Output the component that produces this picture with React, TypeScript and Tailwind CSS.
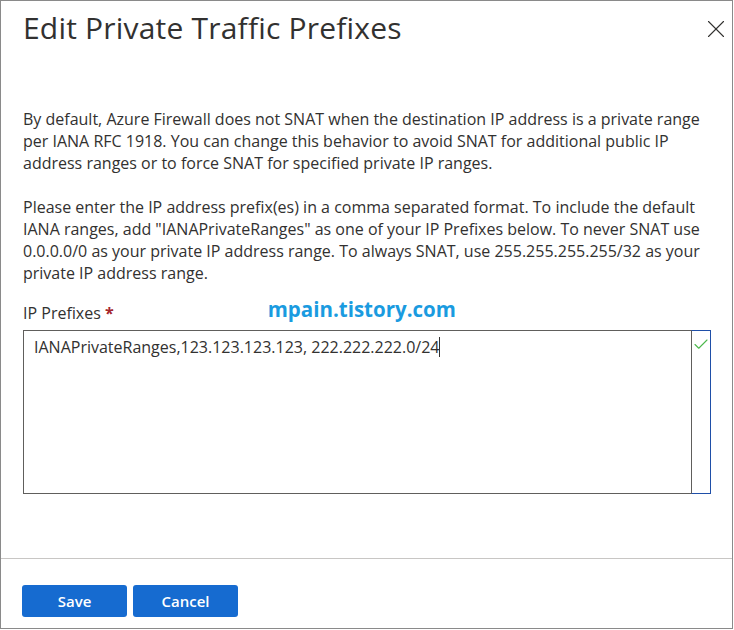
import { X, Check } from 'lucide-react'

const font = { fontFamily: '"Open Sans", "Noto Sans", sans-serif' }

export default function App() {
  return (
    <div style={font} className="w-[733px] h-[629px] border border-[#8a8a8a] bg-white text-[#323130] flex flex-col">
      <header className="flex items-start justify-between pl-[22px] pr-[1px] pt-[7px]">
        <h1 className="text-[30px] leading-[40px] tracking-[0.2px]">Edit Private Traffic Prefixes</h1>
        <button className="mt-[6px] text-[#323130]" aria-label="Close">
          <X size={30} strokeWidth={0.9} />
        </button>
      </header>

      <main className="flex-1 pl-[22px] pr-[21px] pt-[60px] text-[16px] leading-[22px]">
        <p>
          By default, Azure Firewall does not SNAT when the destination IP address is a private range per IANA RFC 1918. You can change this behavior to avoid SNAT for additional public IP address ranges or to force SNAT for specified private IP ranges.
        </p>
        <p className="mt-[22px]">
          Please enter the IP address prefix(es) in a comma separated format. To include the default IANA ranges, add "IANAPrivateRanges" as one of your IP Prefixes below. To never SNAT use 0.0.0.0/0 as your private IP address range. To always SNAT, use 255.255.255.255/32 as your private IP address range.
        </p>

        <div className="mt-[12px] flex items-end">
          <label className="leading-[22px]">
            IP Prefixes <span className="text-[#a4262c] font-bold">*</span>
          </label>
          <span className="ml-[154px] mb-[2px] text-[20.5px] leading-[26px] font-bold text-[#1a9be0]">mpain.tistory.com</span>
        </div>

        <div className="mt-[6px] flex h-[164px]">
          <div className="flex-1 border border-[#605e5c] border-r-0 pl-[10px] pt-[5px]">
            <span>IANAPrivateRanges,123.123.123.123, 222.222.222.0/24</span>
            <span className="inline-block w-px h-[20px] bg-[#323130] align-middle -mt-[3px]" />
          </div>
          <div className="w-[20px] border border-[#605e5c] border-r-[#1f4fa8] border-t-[#1f4fa8] border-b-[#1f4fa8] pt-[4px] flex justify-center">
            <Check size={19} strokeWidth={1.5} className="text-[#4cb84c]" />
          </div>
        </div>
      </main>

      <footer className="border-t border-[#c8c6c4] h-[70px] px-[21px] flex items-start pt-[26px] gap-[6px]">
        <button className="w-[105px] h-[32px] rounded-[3px] bg-[#166bd0] text-white text-[15px] font-semibold">Save</button>
        <button className="w-[105px] h-[32px] rounded-[3px] bg-[#166bd0] text-white text-[15px] font-semibold">Cancel</button>
      </footer>
    </div>
  )
}
